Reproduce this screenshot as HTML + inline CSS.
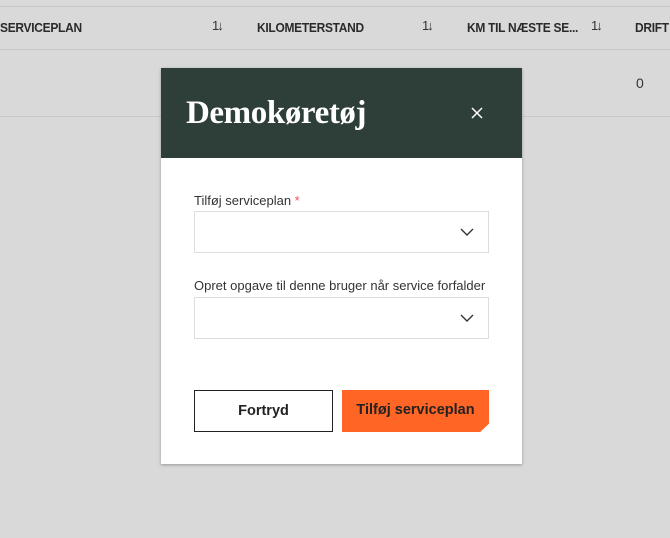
<!DOCTYPE html>
<html><head><style>
body{margin:0;width:670px;height:538px;background:#d8d9d8;position:relative;overflow:hidden;font-family:"Liberation Sans",sans-serif;}
.ln{position:absolute;left:0;width:670px;height:1px;background:#c6c7c6}
.th{position:absolute;top:20px;font-size:13px;font-weight:bold;color:#2a2a2a;letter-spacing:-0.3px;transform:scaleX(0.92);transform-origin:left}
.sort{position:absolute;top:18px;font-size:13px;color:#333;letter-spacing:-2px}
.modal{position:absolute;left:161px;top:68px;width:361px;height:396px;background:#fff;box-shadow:0 1px 3px rgba(0,0,0,.3)}
.hd{height:90px;background:#2e3f3a;position:relative}
.hd h1{margin:0;position:absolute;left:25px;top:27px;font-family:"Liberation Serif",serif;font-size:33px;font-weight:bold;color:#fff;letter-spacing:-0.4px}
.x{position:absolute;left:308px;top:37px}
.lbl{position:absolute;left:33px;font-size:13px;color:#333}
.sel{position:absolute;left:33px;width:295px;height:42px;border:1px solid #ddd;box-sizing:border-box}
.sel svg{position:absolute;right:14px;top:16px}
.btn{position:absolute;top:322px;height:42px;box-sizing:border-box;font-size:14.5px;font-weight:bold;color:#222;text-align:center;line-height:41px}
</style></head><body>
<div class="ln" style="top:6px"></div>
<div class="ln" style="top:49px"></div>
<div class="ln" style="top:116px"></div>
<div class="th" style="left:0">SERVICEPLAN</div>
<div class="th" style="left:257px">KILOMETERSTAND</div>
<div class="th" style="left:467px">KM TIL NÆSTE SE...</div>
<div class="th" style="left:635px">DRIFT</div>
<div class="sort" style="left:212px">1↓</div>
<div class="sort" style="left:422px">1↓</div>
<div class="sort" style="left:591px">1↓</div>
<div style="position:absolute;left:636px;top:75px;font-size:14px;color:#333">0</div>
<div class="modal">
<div class="hd"><h1>Demokøretøj</h1>
<svg class="x" width="16" height="16" viewBox="0 0 16 16"><path d="M3 3L13 13M13 3L3 13" stroke="#fff" stroke-width="1.5"/></svg></div>
<div class="lbl" style="top:125px">Tilføj serviceplan <span style="color:#e55">*</span></div>
<div class="sel" style="top:143px"><svg width="14" height="8" viewBox="0 0 14 8"><path d="M1 1L7 7L13 1" fill="none" stroke="#333" stroke-width="1.4"/></svg></div>
<div class="lbl" style="top:210px">Opret opgave til denne bruger når service forfalder</div>
<div class="sel" style="top:229px"><svg width="14" height="8" viewBox="0 0 14 8"><path d="M1 1L7 7L13 1" fill="none" stroke="#333" stroke-width="1.4"/></svg></div>
<div class="btn" style="left:33px;width:139px;border:1px solid #222">Fortryd</div>
<div class="btn" style="left:181px;width:147px;background:#ff6525;clip-path:polygon(0 0,100% 0,100% 80%,94% 100%,0 100%)">Tilføj serviceplan</div>
</div>
</body></html>
